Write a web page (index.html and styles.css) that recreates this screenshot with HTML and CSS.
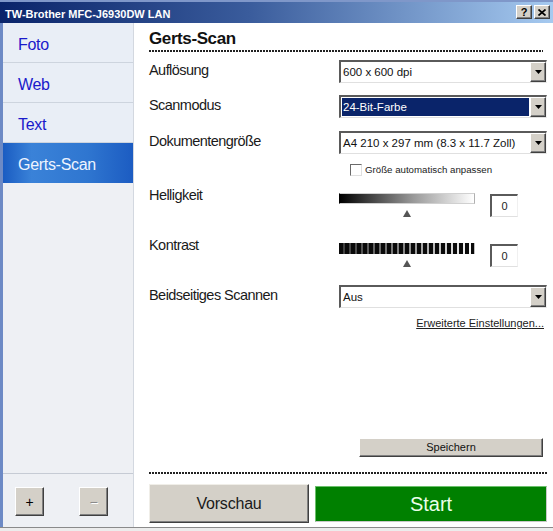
FILE: index.html
```html
<!DOCTYPE html>
<html lang="de">
<head>
<meta charset="utf-8">
<title>TW-Brother MFC-J6930DW LAN</title>
<link rel="stylesheet" href="styles.css">
</head>
<body>
<div class="window">
  <div class="titlebar">
    <span class="title">TW-Brother MFC-J6930DW LAN</span>
    <div class="caption-buttons">
      <span class="cap-btn">?</span>
      <span class="cap-btn"><svg width="8" height="7" viewBox="0 0 8 7"><path d="M0.5 0.5 L7.5 6.5 M7.5 0.5 L0.5 6.5" stroke="#000" stroke-width="1.7" fill="none"/></svg></span>
    </div>
  </div>
  <div class="client">
    <aside class="sidebar">
      <ul class="nav">
        <li class="nav-item">Foto</li>
        <li class="nav-item">Web</li>
        <li class="nav-item">Text</li>
        <li class="nav-item selected">Gerts-Scan</li>
      </ul>
      <div class="sidebar-footer">
        <span class="sq-btn plus">+</span>
        <span class="sq-btn minus">−</span>
      </div>
    </aside>
    <main class="main">
      <h1 class="heading">Gerts-Scan</h1>
      <div class="dots dots-top"></div>
      <div class="form">
        <div class="row">
          <div class="label">Auflösung</div>
          <div class="control">
            <div class="select"><span class="select-value">600 x 600 dpi</span><span class="select-btn"><svg width="7" height="4" viewBox="0 0 7 4"><polygon points="0,0 7,0 3.5,4" fill="#000"/></svg></span></div>
          </div>
        </div>
        <div class="row row-gap12">
          <div class="label">Scanmodus</div>
          <div class="control">
            <div class="select"><span class="select-value highlighted">24-Bit-Farbe</span><span class="select-btn"><svg width="7" height="4" viewBox="0 0 7 4"><polygon points="0,0 7,0 3.5,4" fill="#000"/></svg></span></div>
          </div>
        </div>
        <div class="row row-gap13">
          <div class="label">Dokumentengröße</div>
          <div class="control">
            <div class="select"><span class="select-value">A4 210 x 297 mm (8.3 x 11.7 Zoll)</span><span class="select-btn"><svg width="7" height="4" viewBox="0 0 7 4"><polygon points="0,0 7,0 3.5,4" fill="#000"/></svg></span></div>
          </div>
        </div>
        <div class="row row-check">
          <div class="label"></div>
          <div class="control check-control">
            <span class="checkbox"></span>
            <span class="check-label">Größe automatisch anpassen</span>
          </div>
        </div>
        <div class="row row-slider1">
          <div class="label">Helligkeit</div>
          <div class="control slider">
            <div class="track-wrap">
              <div class="track track-gradient"></div>
              <div class="thumb"></div>
            </div>
            <div class="value-box">0</div>
          </div>
        </div>
        <div class="row row-gap18">
          <div class="label">Kontrast</div>
          <div class="control slider">
            <div class="track-wrap">
              <div class="track track-stripes"></div>
              <div class="thumb"></div>
            </div>
            <div class="value-box">0</div>
          </div>
        </div>
        <div class="row row-gap18">
          <div class="label">Beidseitiges Scannen</div>
          <div class="control">
            <div class="select"><span class="select-value">Aus</span><span class="select-btn"><svg width="7" height="4" viewBox="0 0 7 4"><polygon points="0,0 7,0 3.5,4" fill="#000"/></svg></span></div>
          </div>
        </div>
        <div class="link-row">
          <a class="link" href="#">Erweiterte Einstellungen...</a>
        </div>
      </div>
      <div class="spacer"></div>
      <div class="save-row">
        <span class="btn-save">Speichern</span>
      </div>
      <div class="dots dots-bottom"></div>
      <div class="actions">
        <span class="btn-preview">Vorschau</span>
        <span class="btn-start">Start</span>
      </div>
    </main>
  </div>
  <div class="bottom-edge"></div>
</div>
</body>
</html>
```
FILE: styles.css
```css
html, body {
  margin: 0;
  padding: 0;
  background: #ffffff;
}

.window {
  width: 553px;
  height: 531px;
  display: flex;
  flex-direction: column;
  overflow: hidden;
  font-family: "Liberation Sans", Arial, sans-serif;
  color: #1a1a1a;
  background: #ffffff;
}

/* ---------- title bar ---------- */
.titlebar {
  flex: none;
  height: 23px;
  box-sizing: border-box;
  border-top: 2px solid #7f97c9;
  background: linear-gradient(to right, #0a246a 0%, #3a5c9c 45%, #a6caf0 100%);
  display: flex;
  justify-content: space-between;
  align-items: flex-start;
  padding: 0 3px 0 5px;
}

.title {
  margin-top: 6px;
  font-size: 11px;
  font-weight: bold;
  line-height: 13px;
  color: #ffffff;
  white-space: nowrap;
}

.caption-buttons {
  display: flex;
  gap: 2px;
  margin-top: 3px;
}

.cap-btn {
  width: 16px;
  height: 14px;
  box-sizing: border-box;
  background: #d4d0c8;
  border: 1px solid;
  border-color: #ffffff #404040 #404040 #ffffff;
  box-shadow: inset -1px -1px 0 #808080;
  display: flex;
  align-items: center;
  justify-content: center;
  font-size: 11px;
  font-weight: bold;
  line-height: 12px;
  color: #000000;
}

/* ---------- client ---------- */
.client {
  flex: 1;
  min-height: 0;
  display: flex;
  border-left: 3px solid #6d8ac5;
}

.sidebar {
  flex: none;
  width: 130px;
  border-right: 1px solid #d3d8e0;
  background: #eef0f4;
  display: flex;
  flex-direction: column;
}

.nav {
  flex: 1;
  list-style: none;
  margin: 0;
  padding: 0;
  border-bottom: 1px solid #c6cbd4;
}

.nav-item {
  height: 40px;
  box-sizing: border-box;
  padding: 12px 0 0 15px;
  border-bottom: 1px solid #cdd4de;
  background: #e9eef6;
  font-size: 16px;
  letter-spacing: -0.3px;
  line-height: 20px;
  color: #1a1acb;
}

.nav-item.selected {
  border-bottom: none;
  background: linear-gradient(to right, #1a5cc2 0%, #3a82d8 22%, #2f76d0 65%, #1c5cc2 100%);
  color: #eef4ff;
}

.sidebar-footer {
  flex: none;
  height: 53px;
  box-sizing: border-box;
  padding: 13px 0 0 12px;
  display: flex;
  align-items: flex-start;
  gap: 35px;
}

.sq-btn {
  width: 29px;
  height: 29px;
  box-sizing: border-box;
  background: #d4d0c8;
  border: 1px solid;
  border-color: #ffffff #404040 #404040 #ffffff;
  box-shadow: inset -1px -1px 0 #808080;
  display: flex;
  align-items: center;
  justify-content: center;
  font-size: 14px;
  line-height: 14px;
}

.sq-btn.plus {
  color: #000000;
}

.sq-btn.minus {
  color: #8a8a8a;
  text-shadow: 1px 1px 0 #ffffff;
}

/* ---------- main ---------- */
.main {
  flex: 1;
  min-width: 0;
  display: flex;
  flex-direction: column;
  padding: 6px 6px 4px 15px;
  background: #ffffff;
}

.heading {
  margin: 0 0 1px;
  font-size: 17px;
  font-weight: bold;
  letter-spacing: -0.4px;
  line-height: 20px;
  color: #111111;
}

.dots {
  flex: none;
  height: 2px;
  background-image: linear-gradient(to right, #222222 2px, transparent 2px);
  background-size: 3px 2px;
}

.dots-top {
  margin-right: 4px;
}

.form {
  margin-top: 8px;
}

.row {
  display: flex;
  align-items: flex-start;
}

.row-gap12 { margin-top: 12px; }
.row-gap13 { margin-top: 13px; }
.row-gap18 { margin-top: 18px; }
.row-check { margin-top: 8px; }
.row-slider1 { margin-top: 7px; }

.label {
  flex: none;
  width: 190px;
  font-size: 14.5px;
  letter-spacing: -0.55px;
  line-height: 20px;
  color: #1a1a1a;
}

.control {
  flex: none;
  width: 208px;
}

/* select */
.select {
  height: 23px;
  box-sizing: border-box;
  display: flex;
  background: #ffffff;
  border-style: solid;
  border-width: 2px 1px 1px 2px;
  border-color: #5a5a5a #f4f4f4 #e0e0e0 #5a5a5a;
}

.select-value {
  flex: 1;
  min-width: 0;
  padding-left: 2px;
  font-size: 11.5px;
  line-height: 20px;
  color: #111111;
  white-space: nowrap;
  overflow: hidden;
}

.select-value.highlighted {
  margin: 1px 1px 1px 1px;
  padding-left: 1px;
  line-height: 18px;
  background: #0a246a;
  color: #ffffff;
}

.select-btn {
  flex: none;
  width: 16px;
  box-sizing: border-box;
  background: #d4d0c8;
  border: 1px solid;
  border-color: #ffffff #404040 #404040 #ffffff;
  box-shadow: inset -1px -1px 0 #808080;
  display: flex;
  align-items: center;
  justify-content: center;
}

/* checkbox */
.check-control {
  height: 16px;
  display: flex;
  align-items: center;
  padding-left: 11px;
  box-sizing: border-box;
}

.checkbox {
  width: 12px;
  height: 12px;
  box-sizing: border-box;
  background: #ffffff;
  border: 1px solid;
  border-color: #6a6a6a #e0e0e0 #e0e0e0 #6a6a6a;
}

.check-label {
  margin-left: 3px;
  font-size: 9.7px;
  line-height: 12px;
  color: #222222;
}

/* slider */
.slider {
  display: flex;
  align-items: flex-start;
}

.track-wrap {
  flex: none;
  width: 136px;
  padding-top: 8px;
  display: flex;
  flex-direction: column;
  align-items: center;
}

.track {
  width: 136px;
  height: 11px;
  box-sizing: border-box;
}

.track-gradient {
  background: linear-gradient(to right, #000000 0%, #3a3a3a 20%, #9a9a9a 55%, #ffffff 100%);
  border: 1px solid;
  border-color: #d0d0d0 #b0b0b0 #d0d0d0 #000000;
}

.track-stripes {
  background:
    repeating-linear-gradient(to right, #0a0a0a 0 4px, transparent 4px 6px),
    linear-gradient(to right, #3a3a3a 0%, #8a8a8a 50%, #ffffff 100%);
  border-right: 1px solid #c0c0c0;
}

.thumb {
  margin-top: 6px;
  width: 0;
  height: 0;
  border-left: 4px solid transparent;
  border-right: 4px solid transparent;
  border-bottom: 7px solid #555555;
}

.value-box {
  flex: none;
  margin: 9px 0 0 15px;
  width: 28px;
  height: 23px;
  box-sizing: border-box;
  padding-top: 3px;
  background: #ffffff;
  border-style: solid;
  border-width: 2px 1px 1px 2px;
  border-color: #5a5a5a #f0f0f0 #e0e0e0 #5a5a5a;
  text-align: center;
  font-size: 11px;
  line-height: 14px;
  color: #222222;
}

/* link */
.link-row {
  display: flex;
  justify-content: flex-end;
  margin-top: 8px;
  padding-right: 3px;
}

.link {
  font-size: 11px;
  line-height: 14px;
  color: #222222;
  text-decoration: underline;
}

.spacer {
  flex: 1;
}

.save-row {
  flex: none;
  display: flex;
  justify-content: flex-end;
  padding-right: 4px;
}

.btn-save {
  width: 184px;
  height: 19px;
  box-sizing: border-box;
  background: #d4d0c8;
  border: 1px solid;
  border-color: #ffffff #404040 #404040 #ffffff;
  box-shadow: inset -1px -1px 0 #808080;
  text-align: center;
  font-size: 11px;
  line-height: 16px;
  color: #111111;
}

.dots-bottom {
  margin-top: 15px;
}

.actions {
  flex: none;
  margin-top: 10px;
  display: flex;
  align-items: flex-start;
  gap: 6px;
}

.btn-preview {
  flex: none;
  width: 160px;
  height: 39px;
  box-sizing: border-box;
  background: #d4d0c8;
  border: 1px solid;
  border-color: #f0eee8 #404040 #404040 #f0eee8;
  box-shadow: inset -1px -1px 0 #808080;
  display: flex;
  align-items: center;
  justify-content: center;
  font-size: 16px;
  letter-spacing: -0.2px;
  color: #1a1a1a;
}

.btn-start {
  flex: 1;
  height: 36px;
  margin-top: 2px;
  box-sizing: border-box;
  background: #008000;
  border: 1px solid;
  border-color: #6cc06c #c8c8c8 #c8c8c8 #6cc06c;
  display: flex;
  align-items: center;
  justify-content: center;
  font-size: 20px;
  color: #eaffea;
}

.bottom-edge {
  flex: none;
  height: 4px;
  box-sizing: border-box;
  border-top: 1px solid #8a8a8a;
  background: #ececec;
}
```
